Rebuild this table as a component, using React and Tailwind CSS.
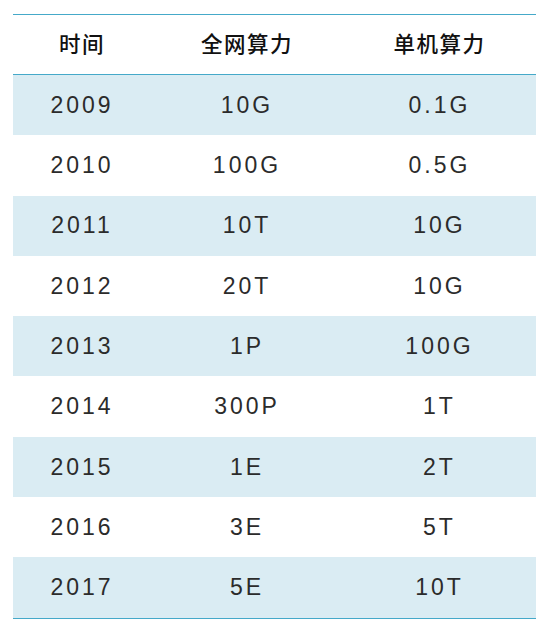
export default function App() {
  const rows = [
    ["2009", "10G", "0.1G"],
    ["2010", "100G", "0.5G"],
    ["2011", "10T", "10G"],
    ["2012", "20T", "10G"],
    ["2013", "1P", "100G"],
    ["2014", "300P", "1T"],
    ["2015", "1E", "2T"],
    ["2016", "3E", "5T"],
    ["2017", "5E", "10T"],
  ];
  const cjk = { fontFamily: '"Noto Sans CJK SC", sans-serif' };
  const num = { fontFamily: '"Liberation Sans", Arial, sans-serif' };
  return (
    <div className="w-[550px] h-[632px] bg-white pt-[14px] pl-[13px]">
      <div className="w-[523px] border-t border-b border-[#45a9c9]">
        <div
          className="grid grid-cols-[138px_192px_193px] h-[60px] pb-[3px] items-center text-center text-[21.5px] font-medium text-[#111] tracking-[1.5px] border-b border-[#45a9c9]"
          style={cjk}
        >
          <div>时间</div>
          <div>全网算力</div>
          <div>单机算力</div>
        </div>
        {rows.map((r, i) => (
          <div
            key={r[0]}
            className={
              "grid grid-cols-[138px_192px_193px] h-[60.3px] items-center text-center text-[23px] text-[#2b2b2b] tracking-[3px] " +
              (i % 2 === 0 ? "bg-[#daecf3]" : "bg-white")
            }
            style={num}
          >
            <div>{r[0]}</div>
            <div>{r[1]}</div>
            <div>{r[2]}</div>
          </div>
        ))}
      </div>
    </div>
  );
}
